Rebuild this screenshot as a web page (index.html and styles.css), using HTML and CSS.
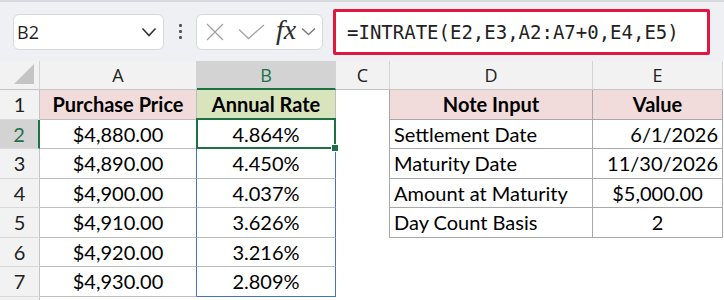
FILE: index.html
```html
<!DOCTYPE html>
<html lang="en">
<head>
  <meta charset="UTF-8">
  <title>INTRATE</title>
  <link rel="stylesheet" href="styles.css">
</head>
<body>

  <div class="toolbar">
    <div class="namebox">
      <span class="name">B2</span>
      <svg class="chev" width="16" height="10" viewBox="0 0 16 10"><path d="M1.5 1.5 8 8.5 14.5 1.5"/></svg>
    </div>
    <div class="grip"><i></i><i></i><i></i></div>
    <div class="fxbox">
      <svg class="ico" width="18" height="18" viewBox="0 0 18 18"><path d="M1 1 17 17M17 1 1 17"/></svg>
      <svg class="ico check" width="27" height="16" viewBox="0 0 27 16"><path d="M1 5.5 10.5 14.5 26 1"/></svg>
      <span class="fx">fx</span>
      <svg class="ico small" width="15" height="9" viewBox="0 0 15 9"><path d="M1 1.5 7.5 7.5 14 1.5"/></svg>
    </div>
    <div class="formula">=INTRATE(E2,E3,A2:A7+0,E4,E5)</div>
  </div>

  <table class="sheet">
    <colgroup>
      <col style="width:40px"><col style="width:157px"><col style="width:139px">
      <col style="width:54px"><col style="width:203px"><col style="width:130px">
    </colgroup>
    <tr class="cols">
      <th class="corner"><svg width="20" height="20" viewBox="0 0 20 20"><path d="M20 0V20H0Z"/></svg></th>
      <th>A</th><th class="on">B</th><th>C</th><th>D</th><th>E</th>
    </tr>
    <tr>
      <td class="rh">1</td>
      <td class="t pink bold">Purchase Price</td>
      <td class="t green bold">Annual Rate</td>
      <td class="edge"></td>
      <td class="u pink bold">Note Input</td>
      <td class="u pink bold">Value</td>
    </tr>
    <tr>
      <td class="rh on">2</td>
      <td class="t">$4,880.00</td>
      <td class="t rng sel">4.864%</td>
      <td class="edge"></td>
      <td class="u l">Settlement Date</td>
      <td class="u r">6/1/2026</td>
    </tr>
    <tr>
      <td class="rh">3</td>
      <td class="t rl">$4,890.00</td>
      <td class="t rng">4.450%</td>
      <td class="edge"></td>
      <td class="u l">Maturity Date</td>
      <td class="u r">11/30/2026</td>
    </tr>
    <tr>
      <td class="rh">4</td>
      <td class="t rl">$4,900.00</td>
      <td class="t rng">4.037%</td>
      <td class="edge"></td>
      <td class="u l">Amount at Maturity</td>
      <td class="u">$5,000.00</td>
    </tr>
    <tr>
      <td class="rh">5</td>
      <td class="t rl">$4,910.00</td>
      <td class="t rng">3.626%</td>
      <td class="edge"></td>
      <td class="u l">Day Count Basis</td>
      <td class="u">2</td>
    </tr>
    <tr>
      <td class="rh">6</td>
      <td class="t rl">$4,920.00</td>
      <td class="t rng">3.216%</td>
      <td></td><td></td><td></td>
    </tr>
    <tr>
      <td class="rh">7</td>
      <td class="t rl">$4,930.00</td>
      <td class="t rng last">2.809%</td>
      <td></td><td></td><td></td>
    </tr>
    <tr>
      <td class="rh"></td>
      <td></td><td></td><td></td><td></td><td></td>
    </tr>
  </table>

</body>
</html>
```

FILE: styles.css
```css
body {
  margin: 0;
  width: 724px;
  height: 300px;
  overflow: hidden;
  background: #ffffff;
  font-family: Lato, sans-serif;
  color: #000;
}

/* formula bar */

.toolbar {
  display: flex;
  align-items: center;
  height: 59px;
  padding-left: 13px;
  background: #eef0f3;
  border-top: 2px solid #d6d9dd;
}

.namebox {
  width: 151px;
  height: 36px;
  box-sizing: border-box;
  display: flex;
  align-items: center;
  justify-content: space-between;
  padding: 0 6px 0 3px;
  background: #fff;
  border: 1px solid #d7d9dc;
  border-radius: 6px;
}

.name {
  font-family: "Open Sans", sans-serif;
  font-size: 18px;
  color: #1f1f1f;
}

.chev path, .ico path {
  fill: none;
  stroke: #333;
  stroke-width: 1.6;
}

.grip {
  display: flex;
  flex-direction: column;
  gap: 3px;
  margin: 0 14px 0 15px;
}

.grip i {
  width: 3px;
  height: 3px;
  background: #555;
  border-radius: 1px;
}

.fxbox {
  width: 127px;
  height: 36px;
  box-sizing: border-box;
  display: flex;
  align-items: center;
  padding-left: 9px;
  background: #fff;
  border: 1px solid #d7d9dc;
  border-radius: 6px;
}

.ico path {
  stroke: #a3a3a3;
  stroke-width: 1.3;
}

.check {
  margin-left: 14px;
}

.fx {
  margin-left: 11px;
  margin-top: -4px;
  font-family: "Liberation Serif", serif;
  font-style: italic;
  font-size: 28px;
  line-height: 1;
  color: #2b2b2b;
}

.small {
  margin-left: 5px;
}

.small path {
  stroke: #7a7a7a;
  stroke-width: 1.4;
}

.formula {
  width: 377px;
  height: 46px;
  box-sizing: border-box;
  margin-left: 10px;
  display: flex;
  align-items: center;
  padding-left: 11px;
  background: #fff;
  border: 3px solid #e0173f;
  border-radius: 2px;
  font-family: "DejaVu Sans Mono", monospace;
  font-size: 19px;
  color: #222;
}

/* grid */

.sheet {
  border-collapse: separate;
  border-spacing: 0;
  table-layout: fixed;
  width: 723px;
}

.cols th {
  height: 29px;
  box-sizing: border-box;
  padding: 0;
  background: #f2f2f2;
  border-right: 1px solid #d4d4d4;
  border-bottom: 1px solid #c4c4c4;
  font-family: "Open Sans", sans-serif;
  font-weight: normal;
  font-size: 18px;
  color: #222;
}

.cols th.on {
  background: #d3d3d3;
  color: #1e7145;
  border-bottom: 2px solid #1e7145;
}

.corner {
  text-align: right;
  vertical-align: bottom;
}

.corner svg {
  display: block;
  margin: 0 5px 5px auto;
}

.corner path {
  fill: #c4c4c4;
}

td {
  height: 29.5px;
  box-sizing: border-box;
  padding: 0 4px;
  font-size: 20px;
  text-align: center;
  white-space: nowrap;
}

.rh {
  background: #f2f2f2;
  border-right: 1px solid #c4c4c4;
  border-bottom: 1px solid #d9d9d9;
  color: #222;
}

.rh.on {
  background: #d3d3d3;
  color: #1e7145;
  border-right: 2px solid #1e7145;
}

.t {
  border-right: 1px solid #bdbdbd;
  border-bottom: 1px solid #bdbdbd;
}

.u {
  border-right: 1px solid #a8a8a8;
  border-bottom: 1px solid #a8a8a8;
}

.edge {
  border-right: 1px solid #a8a8a8;
}

.pink {
  background: #f2dcdb;
}

.green {
  background: #d8e4bc;
}

.bold {
  font-weight: bold;
}

.l {
  text-align: left;
}

.r {
  text-align: right;
}

/* spill range and active cell */

.rl, .rng {
  border-right-color: #4472c4;
}

.last {
  border-bottom-color: #4472c4;
}

.sel {
  position: relative;
}

.sel::after {
  content: "";
  position: absolute;
  top: -2px;
  left: -1px;
  right: -1px;
  bottom: -1px;
  border: 2px solid #1e7145;
}

.sel::before {
  content: "";
  position: absolute;
  right: -4px;
  bottom: -4px;
  width: 6px;
  height: 6px;
  background: #1e7145;
  border: 1px solid #fff;
  z-index: 1;
}
```
